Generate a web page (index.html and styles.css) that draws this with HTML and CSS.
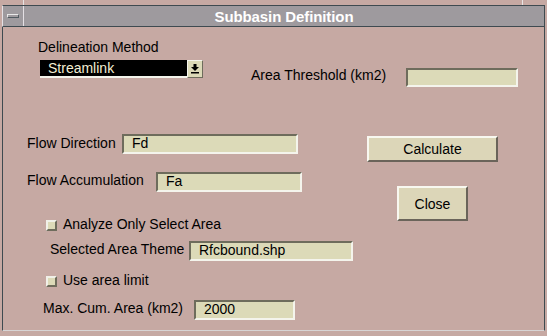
FILE: index.html
```html
<!DOCTYPE html>
<html lang="en">
<head>
  <meta charset="UTF-8" />
  <title>Subbasin Definition</title>
  <link rel="stylesheet" href="styles.css">
</head>
<body>
  <div class="window">
    <!-- Barra de título -->
    <div class="titlebar">
      <div class="menu-button"><span class="menu-bar"></span></div>
      <div class="title">Subbasin Definition</div>
    </div>

    <div class="content">
      <section class="top">
        <div class="method">
          <div class="label">Delineation Method</div>
          <div class="select">
            <div class="select-value">Streamlink</div>
            <div class="select-arrow">
              <svg width="10" height="10" viewBox="0 0 10 10">
                <path d="M3.5 0h3v3h2.5l-4 4-4-4h2.5z" fill="#000"/>
                <rect x="1" y="8" width="8" height="1.5" fill="#000"/>
              </svg>
            </div>
          </div>
        </div>
        <div class="threshold">
          <span class="label threshold-label">Area Threshold (km2)</span>
          <div class="field threshold-field"></div>
        </div>
      </section>

      <section class="main">
        <div class="inputs">
          <div class="row row-fd">
            <span class="label">Flow Direction</span>
            <div class="field">Fd</div>
          </div>
          <div class="row row-fa">
            <span class="label">Flow Accumulation</span>
            <div class="field">Fa</div>
          </div>
          <div class="row row-check row-check-1">
            <span class="checkbox"></span>
            <span class="label">Analyze Only Select Area</span>
          </div>
          <div class="row row-theme">
            <span class="label">Selected Area Theme</span>
            <div class="field">Rfcbound.shp</div>
          </div>
          <div class="row row-check row-check-2">
            <span class="checkbox"></span>
            <span class="label">Use area limit</span>
          </div>
          <div class="row row-max">
            <span class="label">Max. Cum. Area (km2)</span>
            <div class="field">2000</div>
          </div>
        </div>

        <div class="actions">
          <button class="button calculate">Calculate</button>
          <button class="button close">Close</button>
        </div>
      </section>
    </div>
  </div>
</body>
</html>
```

FILE: styles.css
```css
body {
  margin: 0;
  font-family: 'Liberation Sans', Arial, sans-serif;
  font-size: 14px;
  color: #000;
  background: #c6a9a3;
}

/* Janela */
.window {
  position: relative;
  width: 547px;
  height: 336px;
  box-sizing: border-box;
  padding: 5px 2px 0 2px;
  background: #c6a9a3;
}

.window::before,
.window::after {
  content: "";
  position: absolute;
  top: 0;
  width: 1px;
  height: 5px;
  background: #e8e4e4;
}

.window::before {
  left: 23px;
}

.window::after {
  left: 522px;
}

/* Barra de título */
.titlebar {
  display: flex;
  height: 22px;
  box-sizing: border-box;
  background: #9e9a9e;
  border-top: 1px solid #3e4a50;
  border-left: 1px solid #e4e0e4;
  border-bottom: 1px solid #3e4a50;
  border-right: 1px solid #3e4a50;
}

.menu-button {
  width: 20px;
  display: flex;
  align-items: center;
  justify-content: center;
  border-right: 1px solid #e4e0e4;
}

.menu-bar {
  width: 10px;
  height: 2px;
  border-top: 1px solid #e8e8e8;
  border-left: 1px solid #e8e8e8;
  border-bottom: 1px solid #505a60;
  border-right: 1px solid #505a60;
}

.title {
  flex: 1;
  text-align: center;
  color: #fff;
  font-weight: bold;
  font-size: 15px;
  letter-spacing: -0.1px;
  line-height: 20px;
  padding-top: 1px;
}

/* Conteúdo */
.content {
  height: 304px;
  box-sizing: border-box;
  border-left: 1px solid #3e4a50;
  border-right: 1px solid #3e4a50;
  border-bottom: 1px solid #d8d4d4;
}

.label {
  line-height: 16px;
  white-space: nowrap;
}

.field {
  box-sizing: border-box;
  height: 20px;
  padding-left: 8px;
  line-height: 15px;
  background: #dcdab8;
  border: 2px solid;
  border-color: #6e6c5c #f4f4ec #f4f4ec #6e6c5c;
  white-space: nowrap;
}

/* Parte de cima */
.top {
  display: flex;
  padding-top: 12px;
}

.method {
  margin-left: 35px;
  width: 165px;
}

.select {
  display: flex;
  margin-top: 5px;
  margin-left: 2px;
  height: 18px;
}

.select-value {
  width: 147px;
  box-sizing: border-box;
  padding-left: 8px;
  background: #000;
  color: #f2eed4;
  line-height: 16px;
  border-bottom: 2px solid #f4f4ec;
}

.select-arrow {
  width: 16px;
  box-sizing: border-box;
  display: flex;
  align-items: center;
  justify-content: center;
  background: #dcdab8;
  border: 1px solid;
  border-color: #f4f4ec #6e6c5c #6e6c5c #f4f4ec;
}

.threshold {
  display: flex;
  align-items: flex-start;
  margin-top: 29px;
  margin-left: 48px;
}

.threshold-label {
  width: 155px;
  margin-top: -1px;
}

.threshold-field {
  width: 112px;
  height: 19px;
}

/* Parte principal */
.main {
  display: flex;
  margin-top: 47px;
}

.inputs {
  width: 364px;
}

.row {
  display: flex;
  align-items: flex-start;
}

.row-fd {
  margin-left: 24px;
}

.row-fd .label {
  width: 95px;
  margin-top: 1px;
}

.row-fd .field {
  width: 176px;
}

.row-fa {
  margin-top: 18px;
  margin-left: 24px;
}

.row-fa .label {
  width: 129px;
  margin-top: 0;
}

.row-fa .field {
  width: 146px;
}

.row-check {
  margin-left: 43px;
}

.row-check-1 {
  margin-top: 24px;
}

.row-check-2 {
  margin-top: 11px;
}

.checkbox {
  width: 11px;
  height: 11px;
  box-sizing: border-box;
  margin-top: 4px;
  margin-right: 6px;
  background: #dcdab8;
  border: 2px solid;
  border-color: #f0f0e8 #6e6c5c #6e6c5c #f0f0e8;
}

.row-theme {
  margin-top: 9px;
  margin-left: 47px;
}

.row-theme .label {
  width: 139px;
}

.row-theme .field {
  width: 164px;
}

.row-max {
  margin-top: 12px;
  margin-left: 40px;
}

.row-max .label {
  width: 151px;
}

.row-max .field {
  width: 101px;
}

/* Botões */
.actions {
  display: flex;
  flex-direction: column;
  align-items: flex-start;
}

.button {
  font-family: inherit;
  font-size: 14px;
  color: #000;
  padding: 0;
  background: #dcd6b8;
  border: 2px solid;
  border-color: #f8f8f0 #6a645a #6a645a #f8f8f0;
}

.calculate {
  width: 131px;
  height: 26px;
  margin-top: 2px;
}

.close {
  width: 71px;
  height: 35px;
  margin-top: 24px;
  margin-left: 30px;
}
```
